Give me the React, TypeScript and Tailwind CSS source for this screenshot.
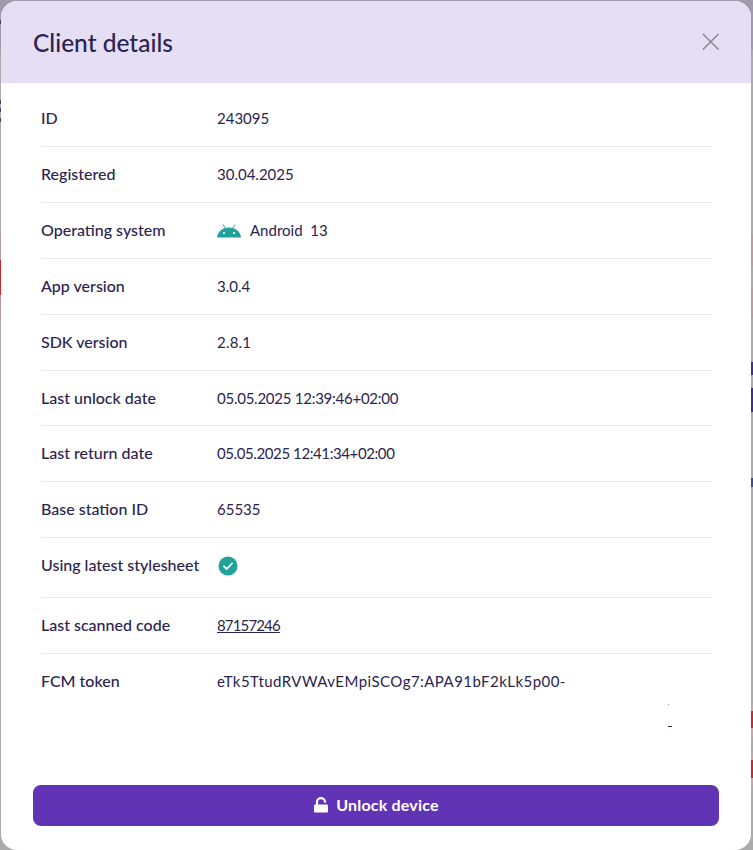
const ink = 'text-[#2b2350]';

type Row = { label: string; value: React.ReactNode; height?: string; valueClass?: string };

const rows: Row[] = [
  { label: 'ID', value: '243095' },
  { label: 'Registered', value: '30.04.2025' },
  {
    label: 'Operating system',
    value: (
      <span className="flex items-center gap-[9px]">
        <AndroidIcon />
        <span>Android&nbsp; 13</span>
      </span>
    ),
  },
  { label: 'App version', value: '3.0.4' },
  { label: 'SDK version', value: '2.8.1', valueClass: 'tracking-[0.2px]' },
  { label: 'Last unlock date', value: '05.05.2025 12:39:46+02:00', height: 'h-[55px]', valueClass: 'tracking-[-0.25px]' },
  { label: 'Last return date', value: '05.05.2025 12:41:34+02:00', valueClass: 'tracking-[-0.4px]' },
  { label: 'Base station ID', value: '65535' },
  { label: 'Using latest stylesheet', value: <CheckIcon />, height: 'h-[60px] pb-1' },
  { label: 'Last scanned code', value: <a className="underline">87157246</a>, valueClass: 'tracking-[-0.85px]' },
];

// background page peeking out either side of the dialog
const edgeStrips = [
  'left-0 top-0 h-[50px] w-[753px] bg-[#9f9bab]',
  'left-0 top-[20px] h-[4px] w-px bg-[#4a3f70]',
  'left-0 top-[100px] h-[4px] w-px bg-[#4a3f70]',
  'left-0 top-[108px] h-[4px] w-px bg-[#4a3f70]',
  'left-0 top-[118px] h-[4px] w-px bg-[#4a3f70]',
  'left-0 top-[235px] h-[83px] w-px bg-[#b99ca0]',
  'left-0 top-[260px] h-[35px] w-px bg-[#c22a30]',
  'right-0 top-[235px] h-[30px] w-[2px] bg-[#b99ca0]',
  'right-0 top-[288px] h-[30px] w-[2px] bg-[#b99ca0]',
  'right-0 top-[362px] h-[13px] w-[2px] bg-[#3f2f88]',
  'right-0 top-[388px] h-[24px] w-[2px] bg-[#3f2f88]',
  'right-0 top-[478px] h-[9px] w-[2px] bg-[#3f4a88]',
  'right-0 top-[705px] h-[32px] w-[2px] bg-[#c9a5a8]',
  'right-0 top-[711px] h-[17px] w-[2px] bg-[#c22a30]',
  'right-0 top-[753px] h-[32px] w-[2px] bg-[#c9a5a8]',
  'right-0 top-[760px] h-[18px] w-[2px] bg-[#c22a30]',
];

function AndroidIcon() {
  return (
    <svg width="24" height="14" viewBox="0 0 24 14" className="shrink-0">
      <path d="M0 13.5C.6 7.6 5.6 3.5 12 3.5s11.400 4.100 12 10z" fill="#22a19a" />
      <path d="M6 .5l2.500 4M18 .5l-2.500 4" stroke="#22a19a" strokeWidth="1" fill="none" />
      <circle cx="7" cy="9" r="1.100" fill="#fff" />
      <circle cx="17" cy="9" r="1.100" fill="#fff" />
    </svg>
  );
}

function CheckIcon() {
  return (
    <svg width="20" height="20" viewBox="0 0 20 20" className="ml-px block">
      <circle cx="10" cy="10" r="9.500" fill="#22a19a" />
      <path d="M6 10.300l2.800 2.700L14 7.500" stroke="#fff" strokeWidth="1.800" fill="none" strokeLinecap="round" strokeLinejoin="round" />
    </svg>
  );
}

function CloseIcon() {
  return (
    <svg width="18" height="18" viewBox="0 0 18 18" className="block">
      <path d="M1 1l15.500 15.500M16.500 1L1 16.500" stroke="#86828f" strokeWidth="1.400" fill="none" />
    </svg>
  );
}

function UnlockIcon() {
  return (
    <svg width="16" height="16" viewBox="0 0 16 16" className="block">
      <rect x="1" y="7.500" width="14" height="8" rx="1" fill="#fff" />
      <path d="M4 8V5a4 3.800 0 0 1 8 0v.8" stroke="#fff" strokeWidth="2.200" fill="none" />
    </svg>
  );
}

export default function App() {
  return (
    <div className="relative h-[850px] w-[753px] overflow-hidden bg-[#ababab] font-['Lato','Liberation_Sans',sans-serif]">
      {edgeStrips.map((strip) => (
        <span key={strip} className={`absolute ${strip}`} />
      ))}
      <div className="relative pl-px pr-[2px] pt-px">
        <div className={`flex h-[849px] flex-col overflow-hidden rounded-2xl bg-white ${ink}`}>
          <header className="flex h-[82px] shrink-0 items-center justify-between bg-[#e6def5] pl-[32px] pr-[31px]">
            <h2 className="pt-[3px] text-[24.5px] font-medium">Client details</h2>
            <button>
              <CloseIcon />
            </button>
          </header>

          <div className="flex h-[702px] shrink-0 flex-col px-10 pt-2">
            <dl className="w-[671px] text-[15px]">
              {rows.map((row) => (
                <div key={row.label} className={`flex items-center border-b border-[#e9e8ec] ${row.height ?? 'h-[56px]'}`}>
                  <dt className="-mt-px w-[176px] shrink-0 text-base font-medium">{row.label}</dt>
                  <dd className={row.valueClass}>{row.value}</dd>
                </div>
              ))}
              <div className="relative flex h-[54px] items-center">
                <dt className="w-[176px] shrink-0 text-base font-medium">FCM token</dt>
                <dd className="tracking-[0.45px]">eTk5TtudRVWAvEMpiSCOg7:APA91bF2kLk5p00-</dd>
                <span className="absolute left-[627px] top-[50px] h-px w-px bg-[#8b8894]" />
                <span className="absolute left-[627px] top-[72px] h-px w-1 bg-[#2b2350]" />
              </div>
            </dl>
          </div>

          <div className="px-8">
            <button className="flex h-[41px] w-full items-center justify-center gap-[7px] rounded-lg bg-[#6134b5] pb-px text-base font-bold tracking-[0.2px] text-white">
              <UnlockIcon />
              Unlock device
            </button>
          </div>
        </div>
      </div>
    </div>
  );
}
